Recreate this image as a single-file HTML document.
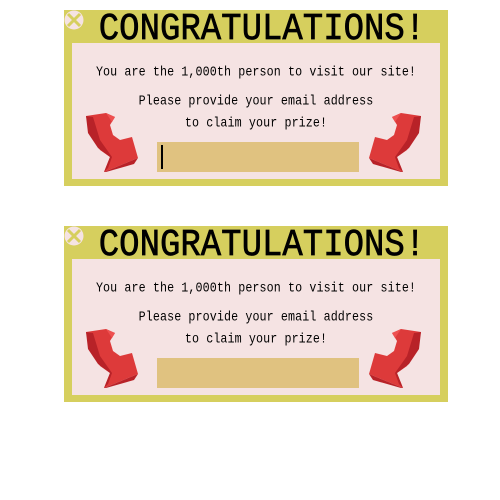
<!DOCTYPE html>
<html><head><style>
body{margin:0;width:500px;height:500px;background:#fff;position:relative;overflow:hidden;font-family:"Liberation Mono",monospace}
.p{position:absolute;left:64px;width:384px;height:176px;background:#d6cf5e}
.in{position:absolute;left:8px;top:33px;width:368px;height:136px;background:#f5e3e3}
.t{position:absolute;left:0;width:384px;text-align:center;top:1px;font-size:34px;font-weight:normal;color:#000;transform:scaleY(1.12);transform-origin:top;padding-left:12px;box-sizing:border-box;line-height:34px;-webkit-text-stroke:0.6px #000}
.l{position:absolute;width:384px;left:0;text-align:center;font-size:11.7px;letter-spacing:0.1px;color:#000;transform:scaleY(1.2);line-height:14px}
.box{position:absolute;left:93px;top:132px;width:202px;height:30px;background:#e0c280}
.cur{position:absolute;left:4px;top:3px;width:2px;height:24px;background:#000}
.ic{position:absolute;left:0;top:0}
svg.a{position:absolute;left:0;top:0}
</style></head><body>

<div class="p" style="top:10px">
<div class="in"></div>
<svg class="ic" width="22" height="22"><circle cx="10" cy="10" r="9.5" fill="#f5e3e3"/><path d="M4 4L16 16M16 4L4 16" stroke="#d6cf5e" stroke-width="3"/></svg>
<div class="t">CONGRATULATIONS!</div>
<div class="l" style="top:55px">You are the 1,000th person to visit our site!</div>
<div class="l" style="top:84px">Please provide your email address</div>
<div class="l" style="top:106px">to claim your prize!</div>
<div class="box"><div class="cur"></div></div>
</div>

<div class="p" style="top:226px">
<div class="in"></div>
<svg class="ic" width="22" height="22"><circle cx="10" cy="10" r="9.5" fill="#f5e3e3"/><path d="M4 4L16 16M16 4L4 16" stroke="#d6cf5e" stroke-width="3"/></svg>
<div class="t">CONGRATULATIONS!</div>
<div class="l" style="top:55px">You are the 1,000th person to visit our site!</div>
<div class="l" style="top:84px">Please provide your email address</div>
<div class="l" style="top:106px">to claim your prize!</div>
<div class="box"></div>
</div>

<svg class="a" width="500" height="500">
<defs>
<g id="ar">
<polygon points="86,116 106,113 115,117 110,125 113,135 120,140 132,137 138,158 104,172 110,157 100,150 90,135" fill="#dd3a3a"/>
<polygon points="86,116 93,117 100,140 112,157 108,168 104,172 110,157 98,148 88,133" fill="#b82228"/>
<polygon points="106,113 115,117 112,122" fill="#ee5050"/>
<polygon points="104,172 138,158 134,164 106,172" fill="#b82228"/>
</g>
</defs>
<use href="#ar"/>
<use href="#ar" transform="translate(507,0) scale(-1,1)"/>
<use href="#ar" transform="translate(0,216)"/>
<use href="#ar" transform="translate(507,216) scale(-1,1)"/>
</svg>
</body></html>
